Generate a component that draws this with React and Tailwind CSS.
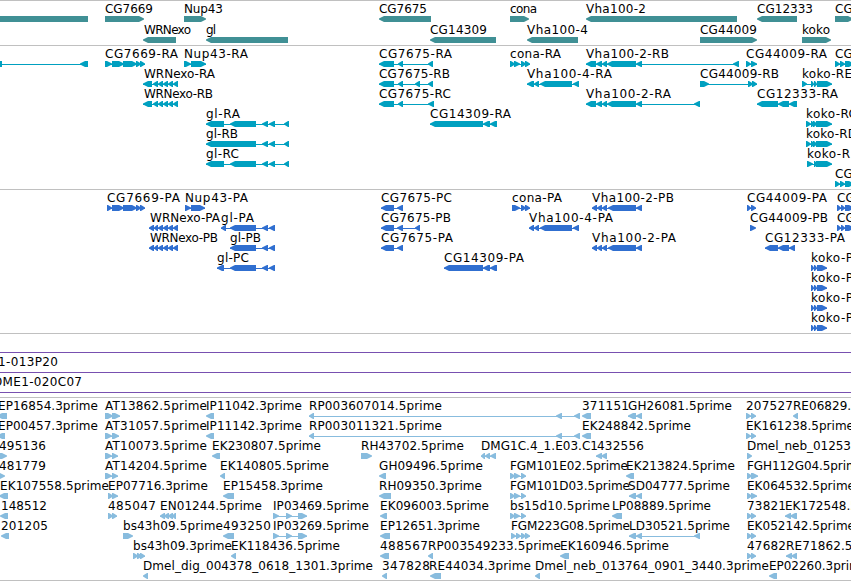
import React from 'react'

// feature: [row, label, label start, label end (null = runs off the edge), strand, exon start/end pairs]
const GENES = [
  [0, '', 0, null, '<', [-20, 88]],
  [0, 'CG7669', 105, 153, '>', [105, 144]],
  [0, 'Nup43', 184, 223, '>', [184, 206]],
  [0, 'CG7675', 379, 427, '<', [379, 431]],
  [0, 'cona', 510, 537, '>', [510, 529]],
  [0, 'Vha100-2', 586, 646, '<', [586, 737]],
  [0, 'CG12333', 757, 813, '<', [757, 797]],
  [0, 'CG', 835, null, '>', [835, 853]],
  [1, 'WRNexo', 144, 191, '<', [143, 176]],
  [1, 'gl', 206, 216, '<', [206, 288]],
  [1, 'CG14309', 430, 487, '<', [430, 496]],
  [1, 'Vha100-4', 527, 588, '<', [527, 578]],
  [1, 'CG44009', 700, 757, '>', [700, 757]],
  [1, 'koko', 802, 830, '>', [802, 831]],
]

const TRANSCRIPTS = [
  [0, '', 0, null, '<', [-5, 2, 80, 88]],
  [0, 'CG7669-RA', 105, 178, '>', [105, 112, 112, 124, 123, 137, 136, 141, 140, 145]],
  [0, 'Nup43-RA', 184, 248, '>', [184, 191, 191, 206]],
  [0, 'CG7675-RA', 379, 452, '<', [379, 394, 398, 403, 428, 433]],
  [0, 'cona-RA', 510, 561, '>', [510, 515, 514, 520, 521, 526, 525, 530]],
  [0, 'Vha100-2-RB', 586, 669, '<', [586, 596, 596, 602, 602, 607, 607, 636, 636, 642, 733, 739]],
  [0, 'CG44009-RA', 746, 827, '>', [746, 751, 751, 757]],
  [0, 'CG', 835, null, '>', [835, 840, 840, 845, 845, 854]],
  [1, 'WRNexo-RA', 144, 215, '<', [143, 152, 153, 158, 158, 163, 163, 168, 168, 173, 173, 178]],
  [1, 'CG7675-RB', 379, 450, '<', [379, 394, 398, 403, 415, 420, 428, 433]],
  [1, 'Vha100-4-RA', 527, 612, '<', [527, 534, 534, 539, 540, 572, 573, 579]],
  [1, 'CG44009-RB', 700, 779, '>', [700, 709, 748, 753, 752, 757]],
  [1, 'koko-RE', 802, 852, '>', [802, 807, 811, 814, 814, 817, 817, 832]],
  [2, 'WRNexo-RB', 144, 213, '<', [143, 152, 153, 158, 158, 163, 163, 168, 168, 173, 173, 178]],
  [2, 'CG7675-RC', 379, 451, '<', [379, 394, 398, 403, 428, 434]],
  [2, 'Vha100-2-RA', 586, 671, '<', [586, 596, 596, 602, 602, 607, 607, 636, 636, 642, 694, 700]],
  [2, 'CG12333-RA', 757, 838, '<', [757, 778, 778, 789, 789, 797]],
  [3, 'gl-RA', 206, 240, '<', [206, 224, 230, 256, 262, 268, 269, 275, 284, 289]],
  [3, 'CG14309-RA', 430, 511, '<', [430, 483, 483, 490, 490, 497]],
  [3, 'koko-RC', 806, 857, '>', [806, 811, 811, 814, 813, 817, 816, 832]],
  [4, 'gl-RB', 206, 238, '<', [206, 256, 262, 268, 269, 275, 284, 289]],
  [4, 'koko-RD', 806, 857, '>', [806, 811, 811, 814, 813, 817, 816, 832]],
  [5, 'gl-RC', 206, 239, '<', [206, 224, 230, 256, 262, 268, 269, 275, 284, 289]],
  [5, 'koko-R', 807, 850, '>', [807, 813, 814, 817, 816, 832]],
  [6, 'CG', 835, null, '>', [835, 840, 840, 845, 845, 854]],
]

const PROTEINS = [
  [0, 'CG7669-PA', 107, 180, '>', [107, 112, 112, 124, 123, 137, 136, 141, 140, 145]],
  [0, 'Nup43-PA', 185, 248, '>', [185, 191, 191, 205]],
  [0, 'CG7675-PC', 381, 452, '<', [381, 394, 397, 403]],
  [0, 'cona-PA', 512, 562, '>', [512, 520, 521, 526, 525, 530]],
  [0, 'Vha100-2-PB', 592, 674, '<', [592, 597, 597, 602, 602, 607, 608, 636, 636, 642]],
  [0, 'CG44009-PA', 747, 827, '>', [747, 751, 751, 756]],
  [0, 'CG', 837, null, '>', [837, 841, 841, 845, 845, 854]],
  [1, 'WRNexo-PA', 150, 220, '<', [149, 154, 154, 158, 158, 163, 163, 168, 168, 173, 173, 178]],
  [1, 'gl-PA', 221, 254, '<', [221, 226, 230, 256, 262, 268, 269, 275]],
  [1, 'CG7675-PB', 381, 451, '<', [381, 394, 397, 403, 415, 420]],
  [1, 'Vha100-4-PA', 529, 613, '<', [529, 534, 534, 539, 540, 572, 573, 579]],
  [1, 'CG44009-PB', 750, 828, '>', [750, 756]],
  [1, 'CG', 837, null, '>', [837, 841, 841, 845, 845, 854]],
  [2, 'WRNexo-PB', 150, 218, '<', [149, 154, 154, 158, 158, 163, 163, 168, 168, 173, 173, 178]],
  [2, 'gl-PB', 230, 261, '<', [230, 256, 262, 268, 269, 275]],
  [2, 'CG7675-PA', 381, 453, '<', [381, 394, 397, 403]],
  [2, 'Vha100-2-PA', 592, 676, '<', [592, 597, 597, 602, 602, 607, 608, 636, 636, 642]],
  [2, 'CG12333-PA', 765, 845, '<', [765, 778, 778, 789, 789, 795]],
  [3, 'gl-PC', 217, 249, '<', [217, 224, 230, 256, 262, 268, 269, 275]],
  [3, 'CG14309-PA', 444, 524, '<', [444, 483, 483, 490, 490, 497]],
  [3, 'koko-P', 811, 853, '>', [811, 814, 814, 817, 817, 827]],
  [4, 'koko-P', 811, 853, '>', [811, 814, 814, 817, 817, 827]],
  [5, 'koko-P', 811, 853, '>', [811, 814, 814, 817, 817, 827]],
  [6, 'koko-P', 811, 853, '>', [811, 814, 814, 817, 817, 827]],
]

const ESTS = [
  [0, 'EP16854.3prime', -2, 98, '<', [-3, 7]],
  [0, 'AT13862.5prime', 105, 207, '>', [105, 113, 112, 120]],
  [0, 'IP11042.3prime', 206, 302, '<', [206, 214]],
  [0, 'RP003607014.5prime', 309, 442, '<', [309, 314, 556, 562, 574, 580]],
  [0, '371151', 582, 629, '<', [582, 591]],
  [0, 'GH26081.5prime', 628, 732, '<', [628, 636, 636, 642]],
  [0, '207527', 746, 793, '>', [746, 751, 751, 756]],
  [0, 'RE06829.5prime', 793, 894, '<', [793, 798]],
  [1, 'EP00457.3prime', -2, 98, '<', [-3, 5]],
  [1, 'AT31057.5prime', 105, 207, '>', [105, 112, 112, 119]],
  [1, 'IP11142.3prime', 206, 302, '<', [206, 214]],
  [1, 'RP003011321.5prime', 309, 442, '<', [309, 314, 556, 562, 574, 580]],
  [1, 'EK248842.5prime', 582, 691, '<', [582, 591]],
  [1, 'EK161238.5prime', 746, 854, '>', [746, 751, 751, 756]],
  [2, '495136', -1, 46, '>', [-4, 7]],
  [2, 'AT10073.5prime', 105, 207, '>', [105, 112, 112, 118]],
  [2, 'EK230807.5prime', 212, 321, '<', [212, 220]],
  [2, 'RH43702.5prime', 361, 464, '>', [361, 372]],
  [2, 'DMG1C.4_1.E03.C1', 481, 598, '<', [481, 485, 485, 490, 490, 496]],
  [2, '432556', 597, 644, '<', [596, 602, 601, 607]],
  [2, 'Dmel_neb_01253', 747, 851, '>', [747, 752]],
  [3, '481779', -1, 46, '>', [-4, 5]],
  [3, 'AT14204.5prime', 105, 207, '>', [105, 112, 112, 118]],
  [3, 'EK140805.5prime', 220, 329, '<', [220, 225]],
  [3, 'GH09496.5prime', 379, 483, '<', [379, 386]],
  [3, 'FGM101E02.5prime', 510, 628, '>', [510, 515, 514, 520, 521, 526]],
  [3, 'EK213824.5prime', 626, 735, '<', [626, 634]],
  [3, 'FGH112G04.5prime', 747, 865, '>', [747, 752, 751, 758]],
  [4, 'EK107558.5prime', 0, 109, '<', [-1, 8]],
  [4, 'EP07716.3prime', 108, 208, '>', [108, 113, 112, 118]],
  [4, 'EP15458.3prime', 223, 323, '<', [223, 234]],
  [4, 'RH09350.3prime', 379, 482, '<', [379, 391]],
  [4, 'FGM101D03.5prime', 510, 630, '>', [510, 515, 514, 520, 521, 526]],
  [4, 'SD04777.5prime', 628, 730, '<', [629, 636, 636, 642]],
  [4, 'EK064532.5prime', 747, 855, '>', [747, 752, 751, 757]],
  [5, '148512', 1, 47, '<', [0, 8]],
  [5, '485047', 108, 156, '>', [108, 113, 112, 117]],
  [5, 'EN01244.5prime', 160, 262, '<', [160, 165, 164, 169, 168, 173, 172, 176]],
  [5, 'IP03469.5prime', 273, 369, '>', [273, 279, 286, 292, 298, 307]],
  [5, 'EK096003.5prime', 380, 489, '<', [380, 387]],
  [5, 'bs15d10.5prime', 510, 610, '>', [510, 515, 514, 520, 521, 526]],
  [5, 'LP08889.5prime', 612, 711, '<', [612, 622]],
  [5, '73821', 747, 786, '>', [747, 752, 751, 756]],
  [5, 'EK172548.5prime', 785, 893, '<', [785, 791, 790, 797]],
  [6, '201205', 1, 48, '<', [1, 9]],
  [6, 'bs43h09.5prime', 123, 223, '>', [123, 133]],
  [6, '493250', 223, 271, '<', [223, 234]],
  [6, 'IP03269.5prime', 273, 369, '>', [273, 279, 286, 292, 298, 307]],
  [6, 'EP12651.3prime', 380, 480, '<', [380, 390]],
  [6, 'FGM223G08.5prime', 511, 630, '>', [511, 516, 516, 521, 521, 526, 525, 530]],
  [6, 'LD30521.5prime', 629, 730, '<', [629, 636, 636, 642, 694, 700]],
  [6, 'EK052142.5prime', 747, 855, '>', [747, 752, 751, 756]],
  [7, 'bs43h09.3prime', 133, 232, '>', [133, 138, 137, 142, 140, 145]],
  [7, 'EK118436.5prime', 231, 340, '<', [231, 236]],
  [7, '488567', 380, 428, '<', [380, 389]],
  [7, 'RP003549233.5prime', 428, 561, '<', [428, 433]],
  [7, 'EK160946.5prime', 560, 669, '<', [560, 569]],
  [7, '47682', 747, 786, '>', [747, 752, 751, 756]],
  [7, 'RE71862.5prime', 786, 888, '<', [786, 792, 791, 797]],
  [8, 'Dmel_dig_004378_0618_1301.3prime', 143, 373, '<', [143, 148]],
  [8, '347828', 382, 430, '<', [382, 387]],
  [8, 'RE44034.3prime', 429, 531, '<', [430, 441]],
  [8, 'Dmel_neb_013764_0901_3440.3prime', 535, 769, '<', [535, 540]],
  [8, 'EP02260.3prime', 769, 868, '<', [769, 777]],
]

// narrow tip, always at least one full-height column behind it
const exonPoints = (a, b, y, strand) => {
  const head = Math.min(5, b - a - 1)
  return strand === '<'
    ? `${a},${y + 2.6} ${a + head},${y} ${b},${y} ${b},${y + 6} ${a + head},${y + 6} ${a},${y + 3.4}`
    : `${a},${y} ${b - head},${y} ${b},${y + 2.6} ${b},${y + 3.4} ${b - head},${y + 6} ${a},${y + 6}`
}

const Label = ({ x, y, end, children }) => (
  <text
    x={x}
    y={y}
    textLength={end === null ? undefined : end - x}
    className="fill-black font-['DejaVu_Sans','Verdana',sans-serif] text-[12px] whitespace-pre"
  >
    {children}
  </text>
)

const Feature = ({ data, pitch }) => {
  const [row, label, x, end, strand, exons] = data
  const base = 12 + row * pitch
  const top = base + 3
  const pairs = []
  for (let i = 0; i < exons.length; i += 2) pairs.push([exons[i], exons[i + 1]])
  const first = exons[0]
  const last = exons[exons.length - 1]

  return (
    <g>
      {pairs.length > 1 && <rect x={first} y={top + 3} width={last - first} height="1" />}
      {pairs.map(([a, b], i) => (
        <polygon key={i} points={exonPoints(a, b, top, strand)} />
      ))}
      {label && <Label x={x} y={base} end={end}>{label}</Label>}
    </g>
  )
}

const Track = ({ features, pitch = 20, className }) => (
  <section className={`w-full shrink-0 overflow-hidden border-t border-[#c0c0c0] ${className}`}>
    <svg width="851" height="100%" className="block">
      {features.map((f, i) => (
        <Feature key={i} data={f} pitch={pitch} />
      ))}
    </svg>
  </section>
)

const Clone = ({ label, x, end }) => (
  <div className="h-5 shrink-0 border-t border-[#7850b0]">
    <svg width="851" height="19" className="block">
      <Label x={x} y={13} end={end}>{label}</Label>
    </svg>
  </div>
)

export default function App() {
  return (
    <main className="flex h-[581px] w-[851px] flex-col overflow-hidden bg-white">
      <Track features={GENES} pitch={21} className="h-[45px] fill-[#409095]" />
      <Track features={TRANSCRIPTS} className="h-36 fill-[#00a0c0]" />
      <Track features={PROTEINS} className="h-36 fill-[#306fd0]" />

      {/* BAC clones */}
      <div className="h-[19px] shrink-0 border-t border-[#c0c0c0]" />
      <Clone label="1-013P20" x={-2} end={58} />
      <Clone label="DME1-020C07" x={-7} end={82} />
      <div className="h-[5px] shrink-0 border-t border-[#7850b0]" />

      <Track features={ESTS} className="h-[184px] border-b fill-[#88bcde]" />
    </main>
  )
}
